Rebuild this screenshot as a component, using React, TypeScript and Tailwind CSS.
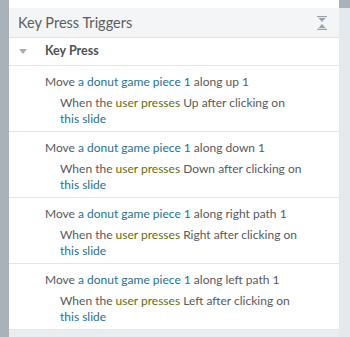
const items = [
  { dir: "up 1", key: "Up" },
  { dir: "down 1", key: "Down" },
  { dir: "right path 1", key: "Right" },
  { dir: "left path 1", key: "Left" },
]

function CollapseIcon() {
  return (
    <svg width="10" height="14" viewBox="0 0 10 14" className="text-[#9aa3ab]">
      <rect x="0" y="0" width="10" height="1.2" fill="currentColor" />
      <path d="M1.5 2 L8.5 2 L5 6 Z" fill="currentColor" />
      <path d="M1.5 12 L8.5 12 L5 8 Z" fill="currentColor" />
      <rect x="0" y="12.8" width="10" height="1.2" fill="currentColor" />
    </svg>
  )
}

export default function App() {
  return (
    <div
      className="flex h-[337px] w-[350px] bg-[#e9edf0] text-[#58595b]"
      style={{ fontFamily: 'Lato, "Open Sans", sans-serif' }}
    >
      <div className="w-[9px] bg-[#a9b1b9]" />
      <div className="flex w-[330px] flex-col">
        <div className="h-[8px] bg-white" />
        <div className="flex h-[30px] items-center justify-between border-b border-[#dfe3e7] bg-[#f3f5f7] pl-[9px] pr-[12px]">
          <span className="text-[14.5px] text-[#5b5d60]">Key Press Triggers</span>
          <CollapseIcon />
        </div>
        <div className="flex h-[28px] items-center border-b border-[#e3e6e9] bg-white">
          <svg width="8" height="5" viewBox="0 0 8 5" className="ml-[10px]">
            <path d="M0 0 L8 0 L4 5 Z" fill="#a8adb2" />
          </svg>
          <span className="ml-[18px] text-[12.5px] font-bold text-[#505254]">Key Press</span>
        </div>
        {items.map((it, i) => (
          <div key={i} className="h-[66px] border-b border-[#e3e6e9] bg-white pl-[36px] pt-[8px] text-[12px] leading-[16px]">
            <div>
              Move <span className="text-[#27708f]">a donut game piece 1</span> along {it.dir}
            </div>
            <div className="mt-[5px] pl-[15px] pr-[12px]">
              When the <span className="text-[#5f6e0c]">user presses</span> {it.key} after clicking on{" "}
              <span className="whitespace-nowrap text-[#27708f]">this slide</span>
            </div>
          </div>
        ))}
      </div>
      <div className="flex w-[11px] flex-col">
        <div className="h-[8px] bg-[#a9b1b9]" />
        <div className="flex-1 bg-[#e4e9ed]" />
      </div>
    </div>
  )
}
